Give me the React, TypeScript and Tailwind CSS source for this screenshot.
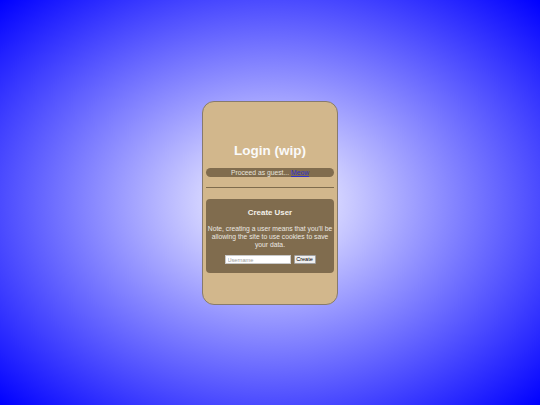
import React from "react";

export default function App() {
  return (
    <div className="w-[540px] h-[405px] flex items-center justify-center bg-[radial-gradient(ellipse_at_center,#ffffff,#0000ff)] font-['Liberation_Sans',Arial,sans-serif]">
      <div className="w-[136px] h-[204px] rounded-[12px] border border-[#877b6d] bg-[#d2b78c] px-[3px] pt-[41px] flex flex-col">
        <h1 className="text-center text-[13.5px] leading-[16px] font-bold text-[#fafafa]">Login (wip)</h1>
        <div className="mt-[9px] h-[9.5px] rounded-full bg-[#806c4e] text-center text-[6.75px] leading-[9.5px] text-[#e8e4dc]">
          Proceed as guest...{" "}
          <a href="#" className="text-[#3030c8] underline">Meow</a>
        </div>
        <div className="mt-[10px] h-px bg-[#7e6b4d]"></div>
        <div className="mt-[11px] rounded-[4px] bg-[#806c4e] pt-[9px] pb-[9px] px-[1px] flex flex-col items-center">
          <h3 className="text-[7.9px] leading-[9px] font-bold text-[#f4f0ea]">Create User</h3>
          <p className="mt-[8px] text-center text-[6.75px] leading-[8px] text-[#ece8e2]">
            Note, creating a user means that you'll be allowing the site to use cookies to save your data.
          </p>
          <div className="mt-[6px] flex items-center gap-[3px]">
            <input
              placeholder="Username"
              className="w-[66px] h-[9px] bg-white border border-[#c8c8c8] px-[2px] text-[5.6px] text-black placeholder:text-[#9a9a9a] outline-none"
            />
            <button className="w-[22px] h-[9px] bg-[#efefef] border border-[#a0a0a0] rounded-[1px] text-[5.5px] leading-[7px] text-black">
              Create
            </button>
          </div>
        </div>
      </div>
    </div>
  );
}
